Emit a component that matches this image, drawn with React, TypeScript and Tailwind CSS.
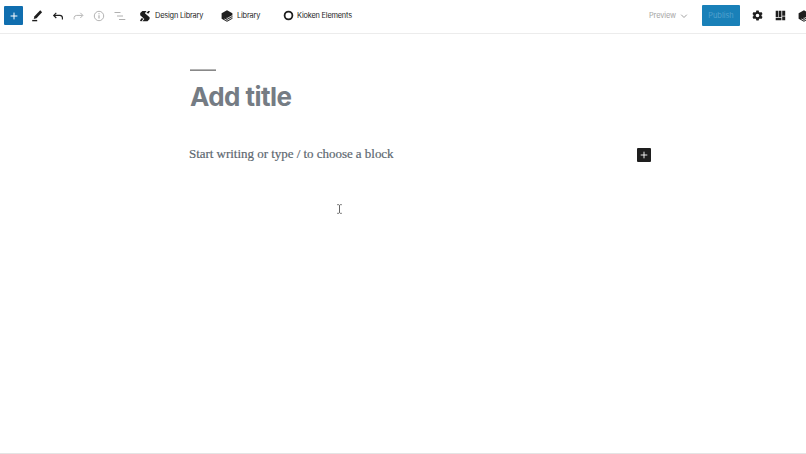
import React from "react";

function Layers() {
  return (
    <svg className="h-3 w-3 shrink-0" viewBox="0 0 12 12">
      <path fill="#1e1e1e" d="M6 .3 11.400 3.300v5.400L6 11.700.6 8.700V3.300Z" />
      <path fill="none" stroke="#fff" strokeWidth=".8" d="M5.500 8.200 6 8.500l5.500-3M3.400 9 6 10.300l5.600-3" />
    </svg>
  );
}

function Header() {
  return (
    <header className="flex h-[34px] w-full items-center overflow-hidden border-b border-[#ececec] pb-[2px] pl-1 text-[7.4px] leading-[10px] text-[#1e1e1e]">
      <button className="flex h-[19px] w-[19px] shrink-0 items-center justify-center rounded-[1px] bg-[#106eaf]" aria-label="Add block">
        <svg className="h-2 w-2" viewBox="0 0 8 8" stroke="#fff" strokeWidth="1"><path d="M4 .6v6.800M.6 4h6.800" /></svg>
      </button>
      <svg className="ml-2 h-3 w-3 shrink-0" viewBox="0 0 12 12" fill="#1e1e1e">
        <path d="M9.200.3 11.100 2.200 5.500 8.200l-2.800.8.8-2.800Z" /><path d="M1.200 9.900h5v1.400h-5Z" />
      </svg>
      <svg className="ml-[9px] h-3 w-3 shrink-0" viewBox="0 0 12 12" fill="none" stroke="#1e1e1e" strokeWidth="1.150">
        <path d="M4.300 2.800 1.700 5.400l2.600 2.600M1.900 5.400h6q2.300.1 2.500 2.200v1.800" />
      </svg>
      <svg className="ml-2 h-3 w-3 shrink-0" viewBox="0 0 12 12" fill="none" stroke="#b5b5b5" strokeWidth="1">
        <path d="m8.300 2.800 2.600 2.600L8.300 8M10.700 5.400h-6Q2.300 5.500 2.100 7.600v1.800" />
      </svg>
      <svg className="ml-[9px] h-3 w-3 shrink-0" viewBox="0 0 12 12" fill="none" stroke="#aaa" strokeWidth=".9">
        <circle cx="6" cy="6" r="4.700" /><path d="M6 5.200v3.400M6 3.300v1" strokeWidth="1.100" />
      </svg>
      <svg className="ml-[9px] h-3 w-3 shrink-0" viewBox="0 0 12 12" stroke="#b0b0b0" strokeWidth="1">
        <path d="M.5 2.500h6M3 6h6M5 9.500h6.300" />
      </svg>
      <div className="ml-[13px] flex w-[82px] shrink-0 items-center gap-1">
        <svg className="h-3 w-3 shrink-0" viewBox="0 0 12 12" fill="#1e1e1e">
          <path d="M3.400.9h4.100L5.900 3.200 10.600 7.300v1.600L8.500 11.200H3.400l2-2.300L1.200 5.200V3Z" />
          <path d="M7.300 3.100 9.300.9h1.700L9.700 3.500ZM.9 11l1.500-2.800 2.200.2-2 2.800Z" />
        </svg>
        <span className="whitespace-nowrap pt-px tracking-[-0.18px]">Design Library</span>
      </div>
      <div className="flex w-[62px] shrink-0 items-center gap-1">
        <Layers />
        <span className="whitespace-nowrap pt-px tracking-[-0.18px]">Library</span>
      </div>
      <div className="flex shrink-0 items-center gap-[3px]">
        <svg className="h-[11px] w-[11px]" viewBox="0 0 11 11" fill="none" stroke="#1e1e1e" strokeWidth="1.800"><circle cx="5.500" cy="5.500" r="3.900" /></svg>
        <span className="whitespace-nowrap pt-px tracking-[-0.2px]">Kioken Elements</span>
      </div>
      <div className="ml-auto flex shrink-0 items-center">
        <span className="w-[31px] pt-px tracking-[-0.1px] text-[#a5a5a5]">Preview</span>
        <svg className="mr-[14px] h-2 w-2" viewBox="0 0 8 8" fill="none" stroke="#a0a0a0" strokeWidth="1"><path d="m1.200 2.700 2.800 2.800 2.800-2.800" /></svg>
        <button className="flex h-[21px] w-[38px] items-center justify-center rounded-[1px] bg-[#1980b8] pt-px text-[#52a1ce]">Publish</button>
        <svg className="ml-3 h-[11px] w-[11px]" viewBox="0 0 24 24">
          <path fill="#1e1e1e" fillRule="evenodd" d="M9.500 1h5l.8 3.200 2 1.100 3.200-.9L23 8.700 20.700 11v2l2.300 2.300-2.500 4.300-3.200-.9-2 1.100-.8 3.200h-5l-.8-3.200-2-1.100-3.200.9L1 15.300 3.300 13v-2L1 8.700l2.500-4.300 3.200.9 2-1.100ZM12 8a4 4 0 1 0 0 8 4 4 0 0 0 0-8Z" />
        </svg>
        <svg className="ml-3 h-[11px] w-[11px]" viewBox="0 0 11 11" fill="#1e1e1e">
          <path d="M.7.8h2.300v6.300H.7ZM3.600.8h2.800v6.300H3.600ZM.7 7.800h5.700v2.400H.7ZM7.200.8h3v5h-3ZM7.200 6.500h3v3.700h-3Z" />
        </svg>
        <div className="-mr-1 ml-3"><Layers /></div>
      </div>
    </header>
  );
}

export default function App() {
  return (
    <div className="flex h-[454px] w-[806px] flex-col overflow-hidden bg-white font-['Inter','Liberation_Sans',sans-serif]">
      <Header />
      <main className="flex-1 pl-[190px] pt-[35px]">
        <div className="h-[2px] w-[26px] border-b border-[#888] bg-[#b4b4b4]" />
        <h1 className="mt-[10px] w-fit whitespace-nowrap text-[26px] font-bold leading-[32px] tracking-[-0.55px] text-[#757c84]">Add title</h1>
        <div className="-ml-px mt-[35px] flex h-[14px] w-[462px] items-center justify-between">
          <p className="-mt-[2px] whitespace-nowrap font-['Liberation_Serif',serif] text-[13px] leading-[14px] tracking-[-0.03px] text-[#5d6870] [-webkit-text-stroke:0.2px_#5d6870]">Start writing or type / to choose a block</p>
          <button className="flex h-[14px] w-[14px] items-center justify-center rounded-[1px] bg-[#1e1e1e]" aria-label="Add block">
            <svg className="h-2 w-2" viewBox="0 0 8 8" stroke="#fff" strokeWidth=".9"><path d="M4 .7v6.600M.7 4h6.600" /></svg>
          </button>
        </div>
        <svg className="ml-[146px] mt-[42px] h-[10px] w-[7px]" viewBox="0 0 7 10" fill="none" stroke="#555" strokeWidth=".9">
          <path d="M1.200.7h1.500l.8.7.8-.7h1.500M3.500 1.400v7.200M1.200 9.300h1.500l.8-.7.8.7h1.500" />
        </svg>
      </main>
      <footer className="h-px bg-[#e4e4e4]" />
    </div>
  );
}
